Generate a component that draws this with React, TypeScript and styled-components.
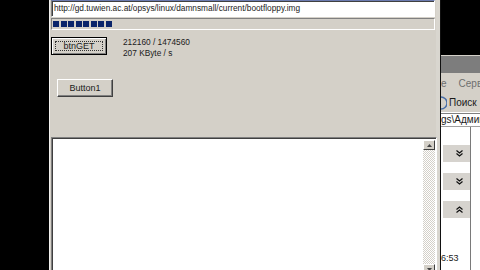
import React from 'react';
import styled, { createGlobalStyle } from 'styled-components';

const GlobalStyle = createGlobalStyle`
  html, body {
    margin: 0;
    padding: 0;
    background: #000;
  }
  body {
    font-family: 'Liberation Sans', Arial, sans-serif;
    font-size: 8.3px;
    color: #1a1a1a;
  }
`;

const Screen = styled.div`
  width: 480px;
  height: 270px;
  overflow: hidden;
  display: flex;
  background: #000;
`;

const LeftGap = styled.div`
  width: 49px;
  flex-shrink: 0;
`;

const AppWindow = styled.div`
  width: 391px;
  flex-shrink: 0;
  box-sizing: border-box;
  height: 100%;
  overflow: hidden;
  background: #d4d0c8;
  border-left: 1px solid #f2f1ee;
  box-shadow: inset -4px 0 0 #d9d6cf;
  padding: 0 5px 0 1px;
  display: flex;
  flex-direction: column;
  & > * {
    flex-shrink: 0;
  }
`;

const UrlBox = styled.div`
  height: 17px;
  box-sizing: border-box;
  background: #fff;
  border: 1px solid;
  border-color: #6b7bb0 #ffffff #ffffff #808080;
  box-shadow: inset 1px 1px 0 #404040;
  padding: 0 2px;
  line-height: 15px;
  white-space: nowrap;
  overflow: hidden;
`;

const Progress = styled.div`
  margin-top: 1px;
  height: 12px;
  box-sizing: border-box;
  border: 1px solid;
  border-color: #808080 #ffffff #ffffff #808080;
  padding: 2px 1px;
  display: flex;
  gap: 1.5px;
`;

const Block = styled.div`
  width: 6px;
  height: 100%;
  background: #0a246a;
`;

const TopRow = styled.div`
  margin-top: 7px;
  height: 18px;
  display: flex;
  align-items: flex-start;
`;

const Button = styled.button<{ $default?: boolean }>`
  width: 56px;
  height: 18px;
  box-sizing: border-box;
  padding: 0;
  margin: 0;
  font: inherit;
  font-size: 9px;
  color: #1a1a1a;
  background: #d4d0c8;
  border: 1px solid;
  border-color: ${(p) => (p.$default ? '#000' : '#ffffff #404040 #404040 #ffffff')};
  box-shadow: ${(p) =>
    p.$default
      ? 'inset 1px 1px 0 #fff, inset -1px -1px 0 #808080'
      : 'inset -1px -1px 0 #808080'};
  display: flex;
  align-items: center;
  justify-content: center;
  position: relative;
`;

const FocusRect = styled.span`
  position: absolute;
  inset: 3px;
  border: 1px dotted #333;
`;

const Stats = styled.div`
  margin-left: 16px;
  display: flex;
  flex-direction: column;
  line-height: 11px;
`;

const Button1Wrap = styled.div`
  margin-top: 24px;
  margin-left: 6px;
  display: flex;
`;

const Memo = styled.div`
  margin-top: 40px;
  margin-right: -2px;
  height: 138px;
  box-sizing: border-box;
  background: #fff;
  border: 1px solid;
  border-color: #808080 #ffffff #ffffff #808080;
  box-shadow: inset 1px 1px 0 #404040;
  display: flex;
  justify-content: flex-end;
  padding: 2px 1px 0 0;
`;

const ScrollBar = styled.div`
  width: 12px;
  display: flex;
  flex-direction: column;
  justify-content: space-between;
  background-color: #fff;
  background-image: repeating-conic-gradient(#d4d0c8 0 25%, #fff 0 50%);
  background-size: 2px 2px;
`;

const ScrollBtn = styled.div`
  height: 10px;
  box-sizing: border-box;
  background: #d4d0c8;
  border: 1px solid;
  border-color: #fff #404040 #404040 #fff;
  display: flex;
  align-items: center;
  justify-content: center;
`;

const Explorer = styled.div`
  width: 40px;
  flex-shrink: 0;
  display: flex;
  flex-direction: column;
  border-left: 1px solid #111;
  box-sizing: border-box;
  overflow: hidden;
  & > * {
    flex-shrink: 0;
  }
`;

const BlackTop = styled.div`
  height: 55px;
  background: #000;
`;

const TitleBar = styled.div`
  height: 17px;
  background: #7d7d7d;
  border-top: 1px solid #d4d0c8;
`;

const MenuBar = styled.div`
  height: 20px;
  background: #d4d0c8;
  display: flex;
  align-items: center;
  gap: 12px;
  color: #6e6e6e;
  white-space: nowrap;
  font-size: 10px;
`;

const ToolBar = styled.div`
  height: 19px;
  background: #d4d0c8;
  display: flex;
  align-items: center;
  gap: 2px;
  white-space: nowrap;
  font-size: 10px;
  border-bottom: 1px solid #ffffff;
  box-shadow: 0 1px 0 #808080;
`;

const AddressBar = styled.div`
  height: 12px;
  margin-top: 1px;
  background: #fff;
  line-height: 11px;
  white-space: nowrap;
  font-size: 10px;
  border-bottom: 1px solid #a0a0a0;
`;

const Body = styled.div`
  flex: 1;
  display: flex;
  background: #fff;
`;

const TaskPane = styled.div`
  width: 30px;
  flex-shrink: 0;
  border-right: 1px solid #7a7a7a;
  padding: 18px 0 7px 2px;
  box-sizing: border-box;
  display: flex;
  flex-direction: column;
  gap: 11px;
`;

const PaneBar = styled.div`
  height: 17px;
  background: #d6d3ce;
  display: flex;
  align-items: center;
  justify-content: flex-end;
  padding-right: 7px;
`;

const Time = styled.div`
  margin-top: auto;
  margin-left: -2px;
  font-size: 9px;
  line-height: 10px;
`;

const Chevron = ({ up }: { up?: boolean }) => (
  <svg width="7" height="7" viewBox="0 0 7 7" style={{ transform: up ? 'rotate(180deg)' : undefined }}>
    <path d="M0.5 0.5 L3.5 3 L6.5 0.5 M0.5 3.5 L3.5 6 L6.5 3.5" fill="none" stroke="#111" strokeWidth="1.2" />
  </svg>
);

const Arrow = ({ down }: { down?: boolean }) => (
  <svg width="5" height="3" viewBox="0 0 5 3">
    <path d={down ? 'M0 0 L5 0 L2.5 3 Z' : 'M0 3 L5 3 L2.5 0 Z'} fill="#444" />
  </svg>
);

export default function App() {
  const blocks = Array.from({ length: 8 });

  return (
    <>
      <GlobalStyle />
      <Screen>
        <LeftGap />
        <AppWindow>
          <UrlBox>http://gd.tuwien.ac.at/opsys/linux/damnsmall/current/bootfloppy.img</UrlBox>
          <Progress>
            {blocks.map((_, i) => (
              <Block key={i} />
            ))}
          </Progress>
          <TopRow>
            <Button $default>
              <FocusRect />
              btnGET
            </Button>
            <Stats>
              <span>212160 / 1474560</span>
              <span>207 KByte / s</span>
            </Stats>
          </TopRow>
          <Button1Wrap>
            <Button>Button1</Button>
          </Button1Wrap>
          <Memo>
            <ScrollBar>
              <ScrollBtn>
                <Arrow />
              </ScrollBtn>
              <ScrollBtn>
                <Arrow down />
              </ScrollBtn>
            </ScrollBar>
          </Memo>
        </AppWindow>
        <Explorer>
          <BlackTop />
          <TitleBar />
          <MenuBar>
            <span>е</span>
            <span>Сервис</span>
          </MenuBar>
          <ToolBar>
            <svg width="6" height="14" viewBox="0 0 6 14">
              <path d="M0 1 A6 6 0 0 1 0 13" fill="none" stroke="#4a6fa8" strokeWidth="1.5" />
            </svg>
            <span>Поиск</span>
          </ToolBar>
          <AddressBar>gs\Администратор</AddressBar>
          <Body>
            <TaskPane>
              <PaneBar>
                <Chevron />
              </PaneBar>
              <PaneBar>
                <Chevron />
              </PaneBar>
              <PaneBar>
                <Chevron up />
              </PaneBar>
              <Time>6:53</Time>
            </TaskPane>
          </Body>
        </Explorer>
      </Screen>
    </>
  );
}
